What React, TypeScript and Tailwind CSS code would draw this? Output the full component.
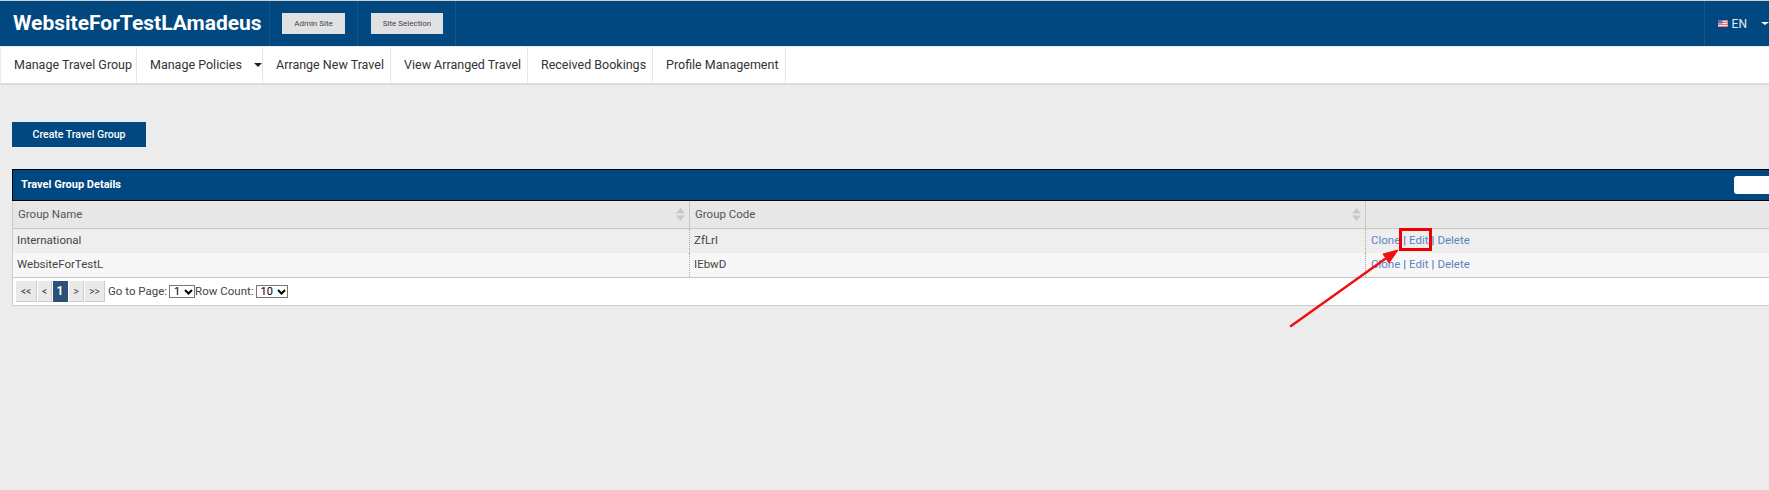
import React from 'react';

const font = "font-['Roboto','Liberation_Sans',sans-serif]";

const navItems = [
  { label: 'Manage Travel Group', w: 'w-[136px]' },
  { label: 'Manage Policies', w: 'w-[126px]', caret: true },
  { label: 'Arrange New Travel', w: 'w-[128px]' },
  { label: 'View Arranged Travel', w: 'w-[137px]' },
  { label: 'Received Bookings', w: 'w-[125px]' },
  { label: 'Profile Management', w: 'w-[133px]' },
];

const rows = [
  { name: 'International', code: 'ZfLrl', bg: 'bg-[#eeeeee]' },
  { name: 'WebsiteForTestL', code: 'IEbwD', bg: 'bg-[#f7f7f7]' },
];

const SortIcon = () => (
  <svg width="9" height="13" viewBox="0 0 9 13" className="fill-[#c8c8c8]">
    <path d="M4.5 0 9 5.5H0z" />
    <path d="M0 7.5h9L4.5 13z" />
  </svg>
);

const Flag = () => (
  <svg width="13" height="9" viewBox="0 0 13 9">
    <rect width="13" height="9" fill="#f4f1f1" />
    <rect width="13" height="1.4" fill="#f06a60" />
    <rect y="2.6" width="13" height="1.3" fill="#f06a60" />
    <rect y="5.2" width="13" height="1.3" fill="#f06a60" />
    <rect y="7.7" width="13" height="1.3" fill="#f06a60" />
    <rect width="6" height="4.6" fill="#5b6fd0" />
  </svg>
);

const PageButton = ({ label, w, active }: { label: string; w: string; active?: boolean }) => (
  <div
    className={`${w} h-[21px] flex items-center justify-center text-[10px] border-b border-r ${
      active
        ? 'bg-[#2b5079] text-white font-bold text-[12px] border-[#2b5079]'
        : 'bg-[#e9e9e9] text-[#444] border-[#cccccc]'
    }`}
  >
    {label}
  </div>
);

const FakeSelect = ({ value, w }: { value: string; w: string }) => (
  <div className={`${w} h-[13px] border border-[#767676] bg-white flex items-center justify-between pl-1 pr-[1px] text-[11px] leading-none text-black`}>
    <span>{value}</span>
    <svg width="9" height="6" viewBox="0 0 9 6" fill="none" stroke="#000" strokeWidth="2">
      <path d="M1 1l3.5 3.5L8 1" />
    </svg>
  </div>
);

export default function App() {
  return (
    <div className={`relative h-[490px] w-[1769px] overflow-hidden bg-[#ececec] ${font}`}>
      <div className="border-t border-[#cfcfcf]">
        <header className="h-[45px] bg-[#00487f] flex items-stretch text-white">
          <div className="w-[270px] pl-[13px] flex items-center border-r border-[#16568a] text-[21px] font-bold leading-none">
            WebsiteForTestLAmadeus
          </div>
          <div className="w-[88px] flex items-center pl-3 border-r border-[#16568a]">
            <div className="w-[63px] h-[21px] bg-[#e0e1e3] text-[#444] text-[8px] flex items-center justify-center">
              Admin Site
            </div>
          </div>
          <div className="w-[98px] flex items-center pl-[13px] border-r border-[#16568a]">
            <div className="w-[72px] h-[21px] bg-[#e0e1e3] text-[#444] text-[8px] flex items-center justify-center">
              Site Selection
            </div>
          </div>
          <div className="ml-auto w-[65px] flex items-center pl-[13px] border-l border-[#16568a] gap-1">
            <Flag />
            <span className="text-[12px] text-[#e5ecf2]">EN</span>
            <div className="ml-[10px] w-0 h-0 border-x-[4px] border-x-transparent border-t-[3px] border-t-white" />
          </div>
        </header>
      </div>

      <nav className="h-[38px] mt-px bg-white flex border-b-2 border-[#dddddd] border-l border-l-[#ececec]">
        {navItems.map((item) => (
          <div
            key={item.label}
            className={`${item.w} flex items-center pl-[13px] border-r border-[#e6e6e6] text-[12.5px] text-[#333]`}
          >
            {item.label}
            {item.caret && (
              <div className="ml-3 w-0 h-0 border-x-[4px] border-x-transparent border-t-[4px] border-t-[#222]" />
            )}
          </div>
        ))}
      </nav>

      <main className="pl-3 pt-[37px]">
        <div className="w-[134px] h-[25px] bg-[#00487f] text-white text-[10.5px] font-medium flex items-center justify-center">
          Create Travel Group
        </div>

        <section className="mt-[22px] w-[1790px] bg-white border-b border-l border-[#cccccc]">
          <div className="h-[32px] bg-[#00487f] border border-black flex items-center pl-[8px] -ml-px">
            <span className="text-white text-[11px] font-bold">Travel Group Details</span>
            <div className="absolute left-[1734px] w-[60px] h-[18px] bg-white rounded-[3px]" />
          </div>

          <div className="grid grid-cols-[677px_676px_1fr] h-[28px] bg-[#e7e7e7] text-[11.5px] text-[#555] border-b border-[#c8c8c8]">
            <div className="flex items-center justify-between pl-[5px] pr-[4px] border-r border-[#c8c8c8]">
              Group Name
              <SortIcon />
            </div>
            <div className="flex items-center justify-between pl-[5px] pr-[4px] border-r border-[#c8c8c8]">
              Group Code
              <SortIcon />
            </div>
            <div />
          </div>

          {rows.map((row) => (
            <div key={row.name} className={`grid grid-cols-[677px_676px_1fr] h-[24px] ${row.bg} text-[11.5px] text-[#444]`}>
              <div className="flex items-center pl-[4px] border-r border-dotted border-[#aaaaaa]">{row.name}</div>
              <div className="flex items-center pl-[4px] border-r border-dotted border-[#aaaaaa]">{row.code}</div>
              <div className="flex items-center pl-[5px] text-[#5b84c4]">
                Clone<span className="mx-[3px] text-[#3f5fa8]">|</span>Edit<span className="mx-[3px] text-[#3f5fa8]">|</span>Delete
              </div>
            </div>
          ))}

          <div className="h-[28px] border-t border-[#c8c8c8] flex items-center pl-[3px] text-[11.5px] text-[#444]">
            <div className="flex gap-px items-center mr-[2px]">
              <PageButton label="<<" w="w-[21px]" />
              <PageButton label="<" w="w-[14px]" />
              <PageButton label="1" w="w-[15px]" active />
              <PageButton label=">" w="w-[15px]" />
              <PageButton label=">>" w="w-[20px]" />
            </div>
            <span className="ml-px">Go to Page:</span>
            <div className="ml-[2px]">
              <FakeSelect value="1" w="w-[26px]" />
            </div>
            <span>Row Count:</span>
            <div className="ml-[2px]">
              <FakeSelect value="10" w="w-[32px]" />
            </div>
          </div>
        </section>
      </main>

      {/* red annotation on top of the screenshot */}
      <div className="absolute left-[1399px] top-[228px] w-[33px] h-[23px] border-[3px] border-[#ee0000]" />
      <svg className="absolute left-0 top-0 pointer-events-none" width="1769" height="490">
        <path d="M1291 326 1385 259" stroke="#f01010" strokeWidth="2.5" strokeLinecap="round" />
        <path d="M1398 250 1383 254 1389 263z" fill="#f01010" stroke="#f01010" />
      </svg>
    </div>
  );
}
